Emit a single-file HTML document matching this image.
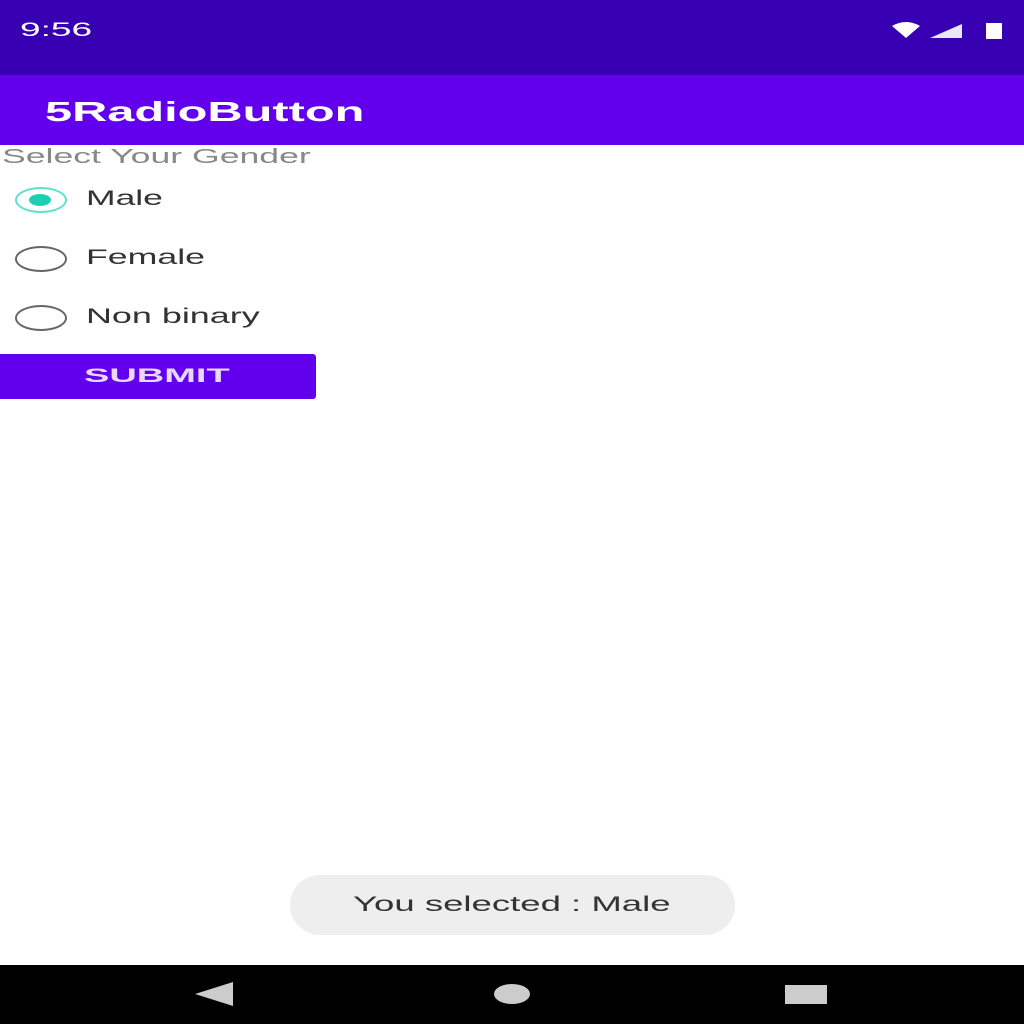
<!DOCTYPE html>
<html><head><style>
body{margin:0;width:1024px;height:1024px;position:relative;background:#fff;font-family:"Liberation Sans",sans-serif;overflow:hidden}
.a{position:absolute}
.t{transform-origin:0 50%;white-space:nowrap}
.r{position:absolute;left:15px;width:48px;height:22px;border:2px solid #666;border-radius:50%}
</style></head><body>
<div class="a" style="left:0;top:0;width:1024px;height:75px;background:#3700B3"></div>
<div class="a t" style="left:20px;top:20px;color:#fff;font-size:19px;transform:scaleX(1.95)">9:56</div>
<svg class="a" style="left:890px;top:20px" width="120" height="22"><path d="M2 6 Q16 -2 30 6 L16 18Z" fill="#fff"/><path d="M40 18 L72 4 L72 18Z" fill="#fff" opacity=".9"/><rect x="96" y="3" width="16" height="16" fill="#fff"/></svg>
<div class="a" style="left:0;top:75px;width:1024px;height:70px;background:#6200EE"></div>
<div class="a t" style="left:45px;top:96px;color:#fff;font-size:28px;font-weight:bold;transform:scaleX(1.74)">5RadioButton</div>
<div class="a t" style="left:2px;top:146px;color:#888;font-size:20px;transform:scaleX(1.78)">Select Your Gender</div>
<div class="r" style="top:187px;border-color:#5fe0d0"></div>
<div class="a" style="left:29px;top:194px;width:22px;height:12px;border-radius:50%;background:#1fcfb5"></div>
<div class="a t" style="left:86px;top:187px;color:#333;font-size:21px;transform:scaleX(1.69)">Male</div>
<div class="r" style="top:246px"></div>
<div class="a t" style="left:86px;top:246px;color:#333;font-size:21px;transform:scaleX(1.7)">Female</div>
<div class="r" style="top:305px"></div>
<div class="a t" style="left:86px;top:305px;color:#333;font-size:21px;transform:scaleX(1.71)">Non binary</div>
<div class="a" style="left:0;top:354px;width:316px;height:45px;background:#6200EE;border-radius:0 3px 3px 0"></div>
<div class="a t" style="left:84px;top:366px;color:#e8d8ff;font-size:19px;font-weight:bold;transform:scaleX(2.0)">SUBMIT</div>
<div class="a" style="left:290px;top:875px;width:445px;height:60px;background:#eee;border-radius:30px"></div>
<div class="a t" style="left:353px;top:893px;color:#333;font-size:21px;transform:scaleX(1.74)">You selected : Male</div>
<div class="a" style="left:0;top:965px;width:1024px;height:59px;background:#000"></div>
<svg class="a" style="left:0;top:965px" width="1024" height="59"><path d="M195 29 L233 17 L233 41Z" fill="#ccc"/><ellipse cx="512" cy="29" rx="18" ry="10" fill="#ccc"/><rect x="785" y="20" width="42" height="19" fill="#ccc"/></svg>
</body></html>
